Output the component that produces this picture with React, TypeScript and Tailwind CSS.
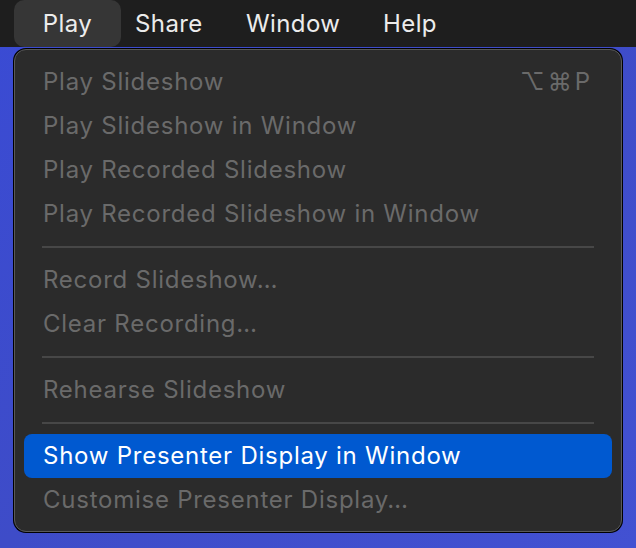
const items: (string | null)[] = [
  "Play Slideshow",
  "Play Slideshow in Window",
  "Play Recorded Slideshow",
  "Play Recorded Slideshow in Window",
  null,
  "Record Slideshow…",
  "Clear Recording…",
  null,
  "Rehearse Slideshow",
  null,
  "Show Presenter Display in Window",
  "Customise Presenter Display…",
];

const Separator = () => (
  <div className="flex h-[22px] items-center px-[18px]">
    <div className="h-[2px] w-full bg-[#474747]" />
  </div>
);

export default function App() {
  return (
    <div
      className="flex h-[548px] w-[636px] flex-col overflow-hidden bg-gradient-to-br from-[#3a4bd4] via-[#3e4cc8] to-[#4251d2]"
      style={{ fontFamily: "Inter, 'Noto Sans', sans-serif" }}
    >
      {/* menu bar */}
      <div className="flex h-[47px] shrink-0 items-stretch bg-[#1e1e1e] pl-[14px] text-[24px] tracking-[0.4px] text-[#ececec]">
        <div className="flex w-[107px] items-center justify-center rounded-[10px] bg-[#363636]">Play</div>
        <div className="flex w-[125px] items-center pl-[14px]">Share</div>
        <div className="flex w-[137px] items-center">Window</div>
        <div className="flex items-center">Help</div>
      </div>

      {/* dropdown */}
      <div className="ml-[14px] mt-[2px] w-[608px] shrink-0 rounded-[12px] border border-[#5a5a5a] bg-[#2b2b2b] px-[9px] pb-[9px] pt-[10px] text-[24px] tracking-[0.75px] shadow-[0_0_0_1px_#000]">
        {items.map((label, i) => {
          if (label === null) return <Separator key={i} />;
          const active = label === "Show Presenter Display in Window";
          return (
            <div
              key={i}
              className={
                active
                  ? "flex h-[44px] items-center justify-between rounded-[8px] bg-[#0059d0] px-[19px] text-white"
                  : "flex h-[44px] items-center justify-between px-[19px] text-[#6a6a6a]"
              }
            >
              <span>{label}</span>
              {i === 0 && <span className="tracking-[3px]">⌥⌘P</span>}
            </div>
          );
        })}
      </div>
    </div>
  );
}
